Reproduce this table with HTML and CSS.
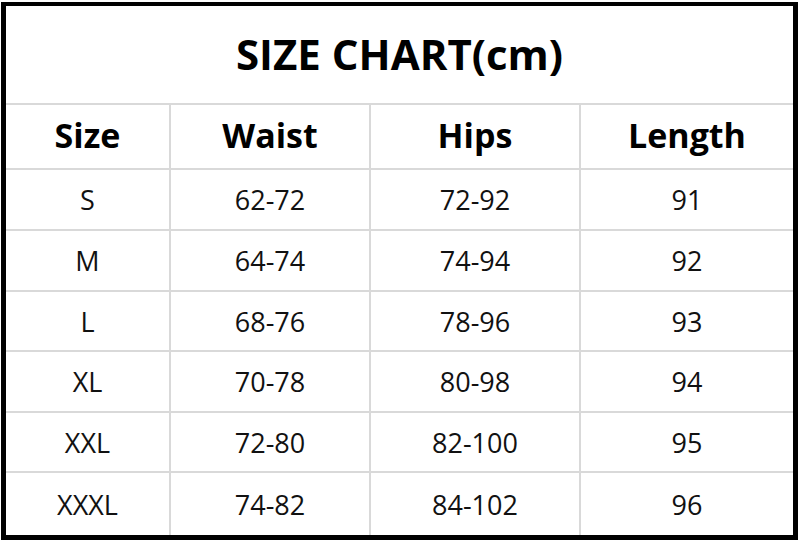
FILE: index.html
```html
<!DOCTYPE html>
<html>
<head>
<meta charset="utf-8">
<link rel="stylesheet" href="styles.css">
</head>
<body>
<div class="chart">
  <div class="title">SIZE CHART(cm)</div>
  <div class="grid">
    <div class="cell head">Size</div>
    <div class="cell head">Waist</div>
    <div class="cell head">Hips</div>
    <div class="cell head">Length</div>

    <div class="cell">S</div><div class="cell">62-72</div><div class="cell">72-92</div><div class="cell">91</div>
    <div class="cell">M</div><div class="cell">64-74</div><div class="cell">74-94</div><div class="cell">92</div>
    <div class="cell">L</div><div class="cell">68-76</div><div class="cell">78-96</div><div class="cell">93</div>
    <div class="cell">XL</div><div class="cell">70-78</div><div class="cell">80-98</div><div class="cell">94</div>
    <div class="cell">XXL</div><div class="cell">72-80</div><div class="cell">82-100</div><div class="cell">95</div>
    <div class="cell">XXXL</div><div class="cell">74-82</div><div class="cell">84-102</div><div class="cell">96</div>
  </div>
</div>
</body>
</html>
```

FILE: styles.css
```css
html, body {
  margin: 0;
  padding: 0;
  background: #ffffff;
}

body {
  font-family: "Open Sans", "Noto Sans", "DejaVu Sans", sans-serif;
  color: #111111;
}

.chart {
  box-sizing: border-box;
  margin: 2px 0 0 1px;
  width: 797px;
  height: 538px;
  border: 5px solid #000000;
  border-top-width: 4px;
  background: #d9d9d9;
  display: flex;
  flex-direction: column;
  gap: 2px;
}

.title {
  height: 97px;
  flex: none;
  background: #ffffff;
  display: flex;
  align-items: center;
  justify-content: center;
  font-weight: 700;
  font-size: 42px;
  color: #000000;
  padding-bottom: 2px;
  box-sizing: border-box;
}

.grid {
  flex: 1;
  display: grid;
  grid-template-columns: 163px 198px 208px 212px;
  grid-template-rows: 63px 59px 59px 58px 59px 58px 1fr;
  gap: 2px;
}

.cell {
  background: #ffffff;
  display: flex;
  align-items: center;
  justify-content: center;
  font-size: 27px;
}

.head {
  font-weight: 700;
  font-size: 34px;
  color: #000000;
  padding-bottom: 4px;
  box-sizing: border-box;
}
```
